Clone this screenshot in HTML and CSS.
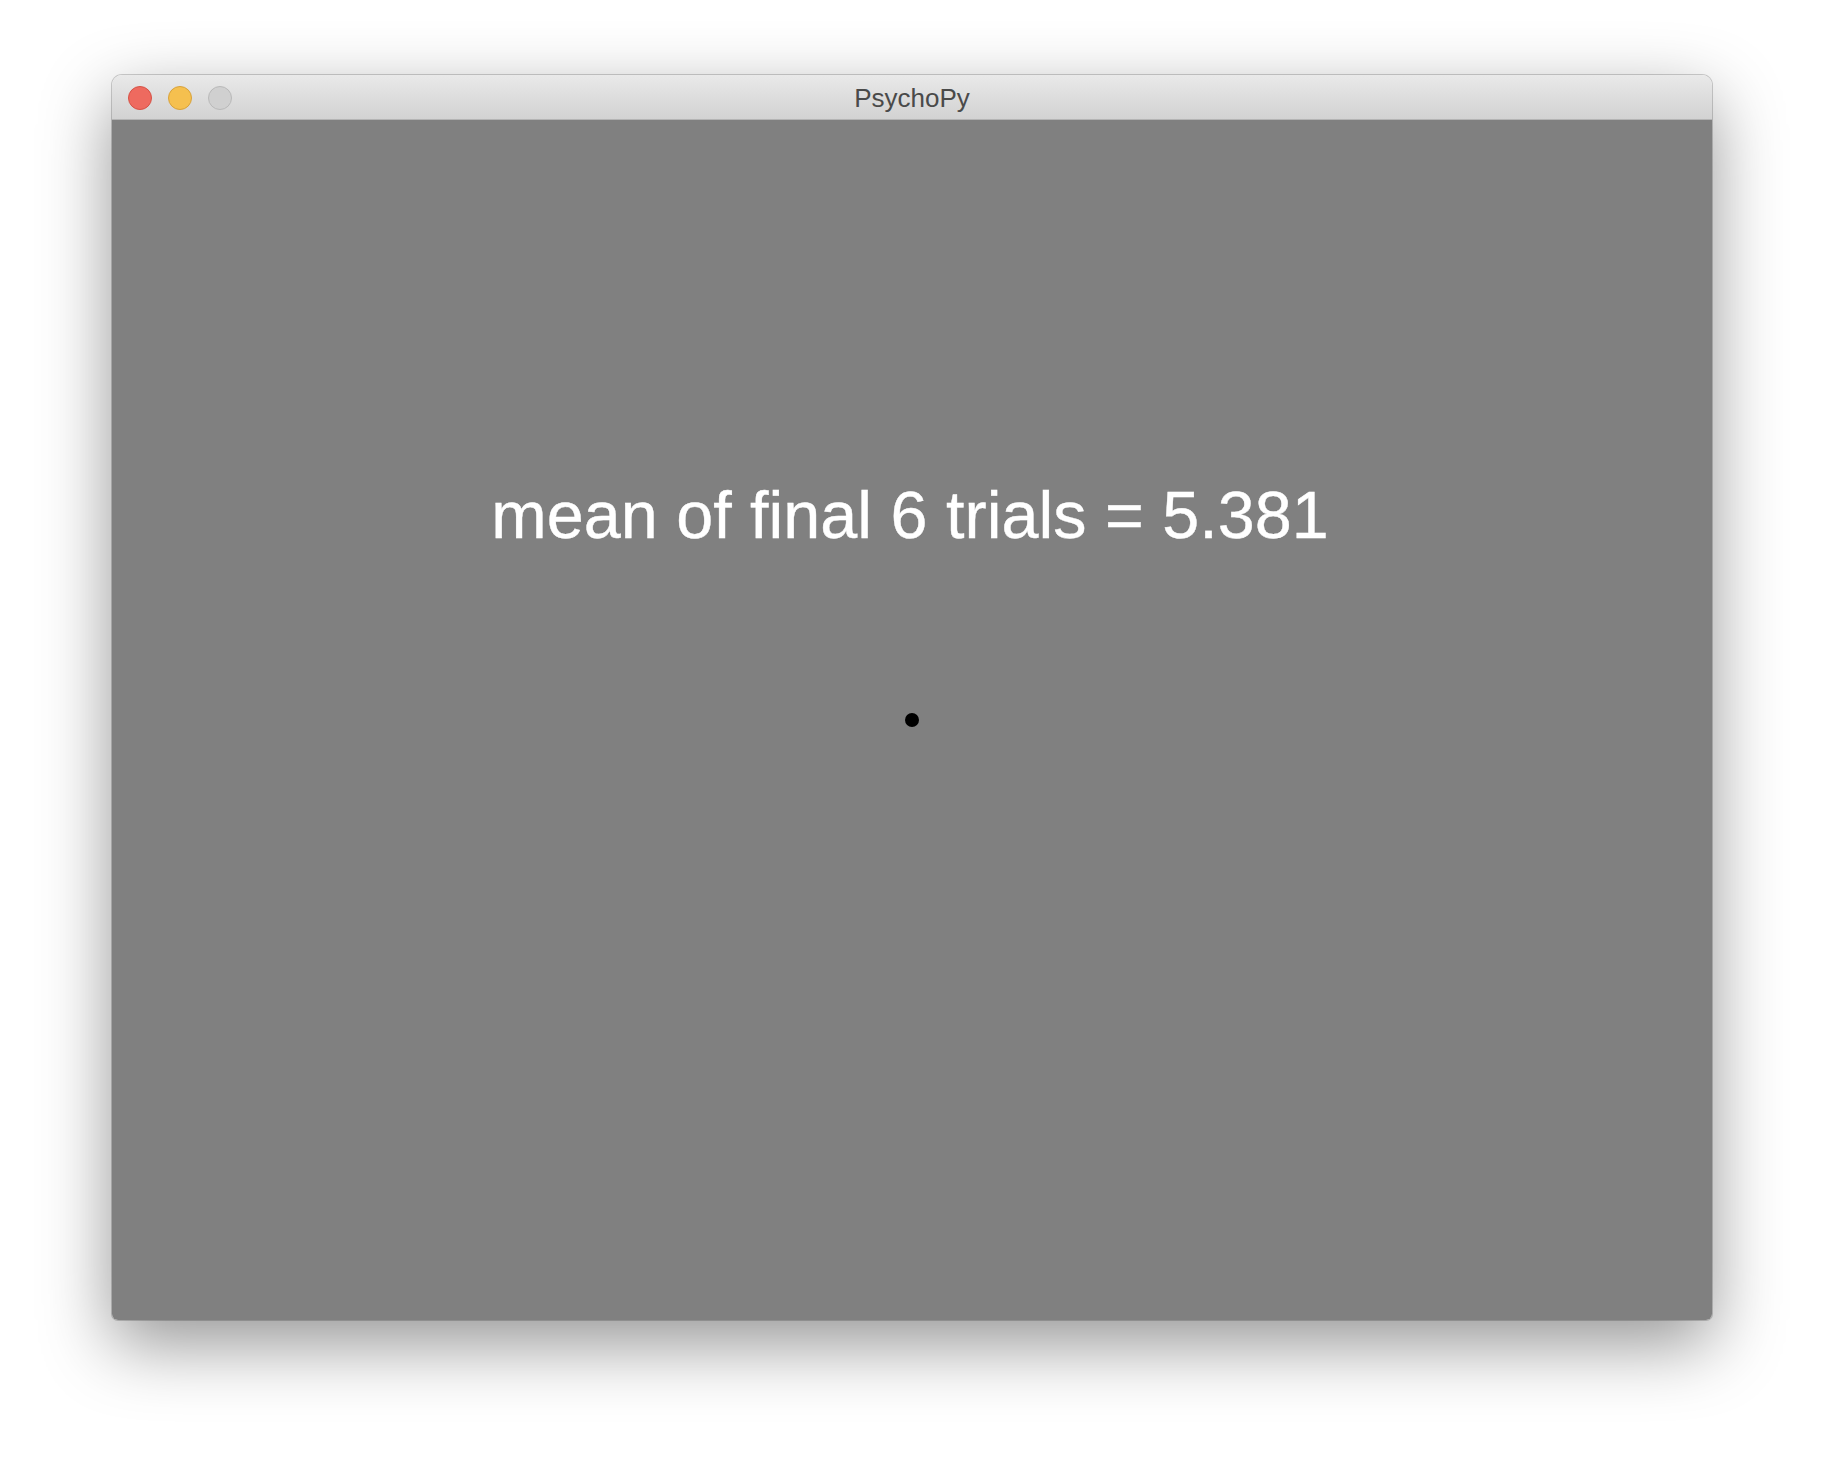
FILE: index.html
```html
<!DOCTYPE html>
<html>
<head>
<meta charset="utf-8">
<title>PsychoPy</title>
<link rel="stylesheet" href="styles.css">
</head>
<body>
<div class="window">
  <div class="titlebar">
    <div class="lights">
      <span class="light close"></span>
      <span class="light min"></span>
      <span class="light zoom"></span>
    </div>
    <div class="title">PsychoPy</div>
  </div>
  <div class="content">
    <div class="message">mean of final 6 trials = 5.381</div>
    <div class="fixation"></div>
  </div>
</div>
</body>
</html>
```

FILE: styles.css
```css
html, body {
  margin: 0;
  padding: 0;
  background: #ffffff;
}
body {
  width: 1824px;
  height: 1468px;
  overflow: hidden;
  padding: 75px 0 0 112px;
  box-sizing: border-box;
  font-family: "Liberation Sans", Arial, sans-serif;
}
.window {
  width: 1600px;
  height: 1245px;
  border-radius: 10px 10px 6px 6px;
  overflow: hidden;
  box-shadow: 0 24px 70px rgba(0,0,0,0.42), 0 0 0 1px rgba(0,0,0,0.18);
  display: flex;
  flex-direction: column;
}
.titlebar {
  height: 44px;
  flex: 0 0 44px;
  background: linear-gradient(#e9e9e9, #d2d2d2);
  border-bottom: 1px solid #b4b4b4;
  display: flex;
  align-items: center;
  position: relative;
}
.lights {
  display: flex;
  gap: 16px;
  padding-left: 16px;
  padding-top: 2px;
}
.light {
  width: 22px;
  height: 22px;
  border-radius: 50%;
  display: block;
}
.close { background: #ee6a5f; border: 1px solid #d65246; }
.min { background: #f5c04f; border: 1px solid #d8a23b; }
.zoom { background: #d0d0d0; border: 1px solid #b9b9b9; }
.title {
  position: absolute;
  left: 0;
  right: 0;
  top: 0;
  text-align: center;
  font-size: 26px;
  line-height: 26px;
  padding-top: 10px;
  color: #4a4a4a;
}
.content {
  flex: 1;
  background: #808080;
  display: flex;
  flex-direction: column;
  align-items: center;
}
.message {
  margin-top: 362px;
  margin-right: 4px;
  font-size: 66.5px;
  line-height: 66px;
  color: #ffffff;
  white-space: nowrap;
  -webkit-text-stroke: 0.4px #ffffff;
}
.fixation {
  margin-top: 165px;
  width: 14px;
  height: 14px;
  border-radius: 50%;
  background: #000000;
}
```
